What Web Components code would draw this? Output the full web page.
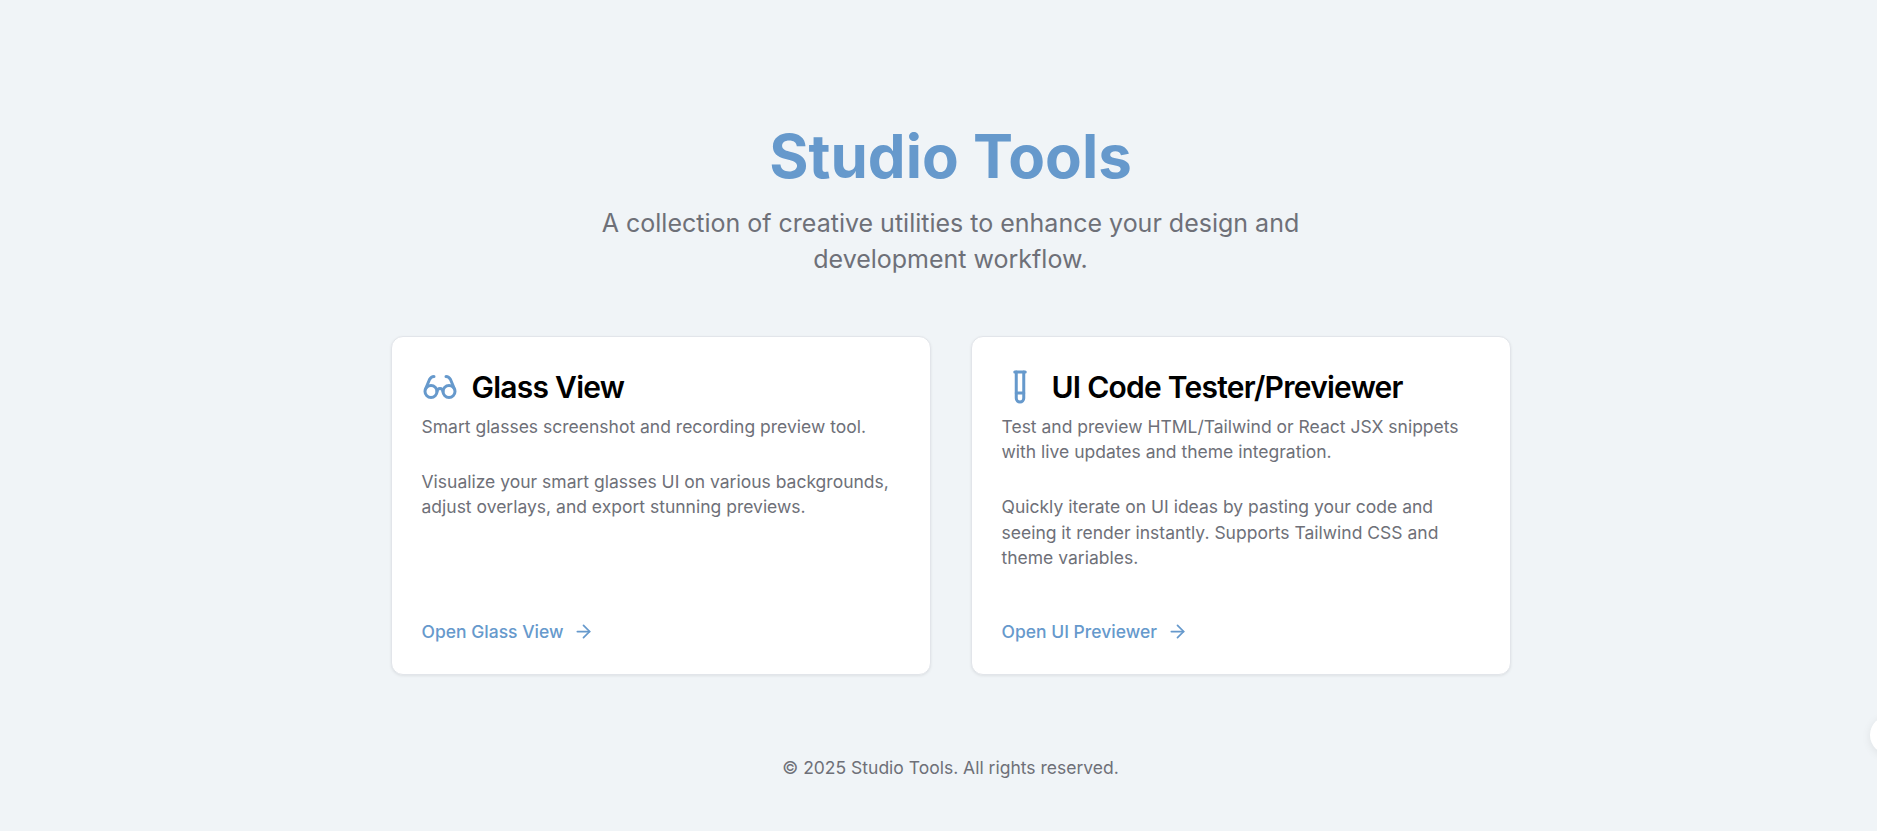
<!DOCTYPE html>
<html lang="en">
<head>
<meta charset="utf-8">
<title>Studio Tools</title>
<style>
  html, body { margin: 0; height: 100%; overflow: hidden; }
  body {
    background: #f0f4f7;
    font-family: Inter, "Liberation Sans", sans-serif;
  }
</style>
</head>
<body>
<studio-page>
  <studio-header slot="header" heading="Studio Tools">A collection of creative utilities to enhance your design and development workflow.</studio-header>

  <tool-card icon="glasses" heading="Glass View" link="Open Glass View">
    <p slot="summary">Smart glasses screenshot and recording preview tool.</p>
    <p>Visualize your smart glasses UI on various backgrounds, adjust overlays, and export stunning previews.</p>
  </tool-card>

  <tool-card icon="test-tube" heading="UI Code Tester/Previewer" link="Open UI Previewer">
    <p slot="summary">Test and preview HTML/Tailwind or React JSX snippets with live updates and theme integration.</p>
    <p>Quickly iterate on UI ideas by pasting your code and seeing it render instantly. Supports Tailwind CSS and theme variables.</p>
  </tool-card>

  <span slot="footer">© 2025 Studio Tools. All rights reserved.</span>
</studio-page>
<float-button></float-button>

<script>
const ICONS = {
    'glasses': '<circle cx="6" cy="15" r="4"/><circle cx="18" cy="15" r="4"/><path d="M14 15a2 2 0 0 0-2-2 2 2 0 0 0-2 2"/><path d="M2.5 13 5 7c.7-1.3 1.4-2 3-2"/><path d="M21.5 13 19 7c-.7-1.3-1.5-2-3-2"/>',
    'test-tube': '<path d="M14.5 2v17.5c0 1.4-1.1 2.5-2.5 2.5c-1.4 0-2.5-1.1-2.5-2.5V2"/><path d="M8.5 2h7"/><path d="M14.5 16h-5"/>',
    'arrow-right': '<path d="M5 12h14"/><path d="m12 5 7 7-7 7"/>'
};

const svgIcon = (name, size, stroke = 2) =>
    `<svg width="${size}" height="${size}" viewBox="0 0 24 24" fill="none" stroke="currentColor" stroke-width="${stroke}" stroke-linecap="round" stroke-linejoin="round" aria-hidden="true">${ICONS[name]}</svg>`;

/**
 * Page frame: header, two column tool grid and footer.
 */
class StudioPage extends HTMLElement {
    constructor() {
        super();
        this.attachShadow({ mode: 'open' }).innerHTML = `
      <style>
        :host {
          display: flex;
          flex-direction: column;
          align-items: center;
          height: 831px;
          box-sizing: border-box;
          padding: 120px 0 0 24px;
        }
        .grid {
          display: grid;
          grid-template-columns: 540px 540px;
          gap: 40px;
          margin-top: 59px;
        }
        footer {
          margin-top: 80px;
          font-size: 17.5px;
          line-height: 25.4px;
          color: #6e7078;
        }
      </style>
      <slot name="header"></slot>
      <div class="grid"><slot></slot></div>
      <footer><slot name="footer"></slot></footer>`;
    }
}
customElements.define('studio-page', StudioPage);

/**
 * Title and tagline above the grid.
 */
class StudioHeader extends HTMLElement {
    constructor() {
        super();
        this.attachShadow({ mode: 'open' }).innerHTML = `
      <style>
        :host {
          display: block;
          text-align: center;
        }
        h1 {
          margin: 0 0 12.5px;
          font-size: 60px;
          line-height: 72px;
          font-weight: 700;
          color: #6699cc;
        }
        p {
          margin: 0 auto;
          width: 768px;
          font-size: 25px;
          line-height: 36.25px;
          color: #6e7078;
        }
      </style>
      <h1></h1>
      <p><slot></slot></p>`;
        this.shadowRoot.querySelector('h1').textContent = this.getAttribute('heading');
    }
}
customElements.define('studio-header', StudioHeader);

/**
 * One tool: icon, heading, two paragraphs and a link pinned to the bottom.
 */
class ToolCard extends HTMLElement {
    constructor() {
        super();
        this.attachShadow({ mode: 'open' }).innerHTML = `
      <style>
        :host {
          display: flex;
          flex-direction: column;
          box-sizing: border-box;
          padding: 30px;
          background: #fff;
          border: 1px solid #e2e5ea;
          border-radius: 12px;
          box-shadow: 0 1px 3px rgba(0, 0, 0, .08);
          color: #6e7078;
          font-size: 17.5px;
          line-height: 25.2px;
        }
        .head {
          display: flex;
          align-items: center;
          gap: 14px;
          height: 40px;
          margin-bottom: 7px;
        }
        .head svg { color: #6699cc; flex: none; }
        h2 {
          margin: 0;
          font-size: 30px;
          line-height: 40px;
          font-weight: 600;
          letter-spacing: -.75px;
          color: #000;
        }
        ::slotted(p) { margin: 0; }
        .summary { margin-bottom: 30px; }
        a {
          display: inline-flex;
          align-items: center;
          gap: 10px;
          margin-top: auto;
          padding-top: 48.7px;
          font-weight: 500;
          color: #6699cc;
          text-decoration: none;
        }
      </style>
      <div class="head">${svgIcon(this.getAttribute('icon'), 36)}<h2></h2></div>
      <div class="summary"><slot name="summary"></slot></div>
      <slot></slot>
      <a href="#"><span></span>${svgIcon('arrow-right', 21)}</a>`;
        this.shadowRoot.querySelector('h2').textContent = this.getAttribute('heading');
        this.shadowRoot.querySelector('a span').textContent = this.getAttribute('link');
    }
}
customElements.define('tool-card', ToolCard);

/**
 * Round button sticking out over the right edge of the window.
 */
class FloatButton extends HTMLElement {
    constructor() {
        super();
        this.attachShadow({ mode: 'open' }).innerHTML = `
      <style>
        :host {
          position: fixed;
          left: 1870px;
          top: 716px;
          width: 38px;
          height: 38px;
          border-radius: 50%;
          background: #fff;
          box-shadow: 0 2px 10px rgba(0, 0, 0, .08);
        }
      </style>`;
    }
}
customElements.define('float-button', FloatButton);
</script>
</body>
</html>
